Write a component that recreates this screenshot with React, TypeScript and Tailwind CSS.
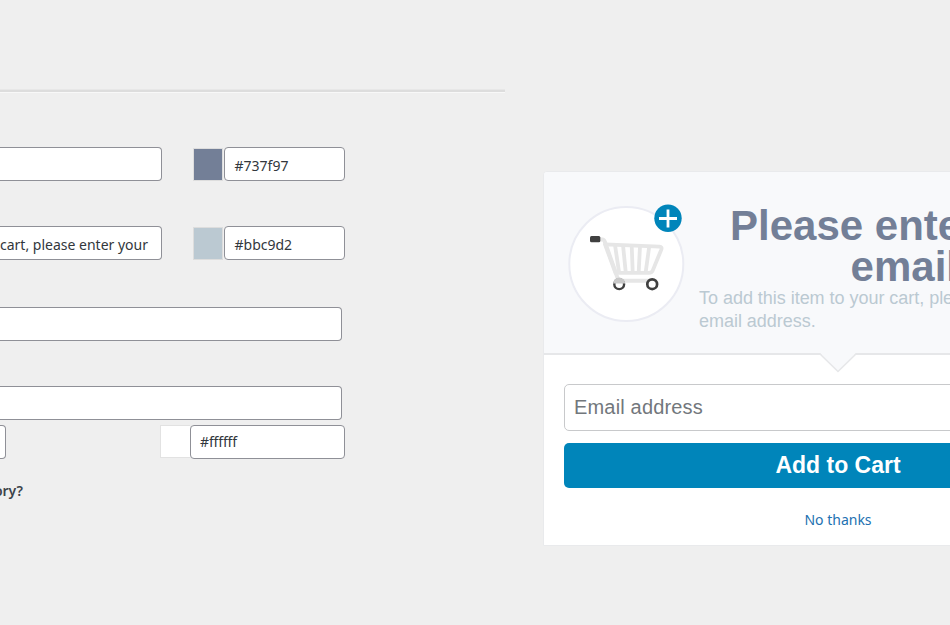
const uiFont = "font-['Noto_Sans',sans-serif]";

function Field({ className, children }: { className: string; children?: string }) {
  return (
    <div
      className={`flex h-[34px] shrink-0 items-center border border-[#8f9097] bg-white text-[14px] text-[#32373c] ${className}`}
    >
      {children}
    </div>
  );
}

function ColorField({ swatch, value }: { swatch: string; value: string }) {
  return (
    <div className="flex gap-px">
      <div className={`mt-px h-[33px] w-[30px] border border-[#dddddd] ${swatch}`} />
      <Field className="w-[121px] rounded-[4px] pt-[2px] pl-[9.5px]">{value}</Field>
    </div>
  );
}

function CartIcon() {
  return (
    <svg width="120" height="124" viewBox="0 0 120 124" fill="none" className="block">
      <circle cx="58.3" cy="64" r="57" fill="#fff" stroke="#ebecf3" strokeWidth="2" />
      <path d="M32 39.5h2.5q1.5 0 2.3 2.2L50.5 80.7H82" stroke="#e6e6e6" strokeWidth="4" strokeLinejoin="round" />
      <path d="M37 44.3 91.5 46.6q2.8.2 1.8 3l-8.4 20.5q-1 2.8-4 2.8H47.5Z" stroke="#e6e6e6" strokeWidth="3.8" strokeLinejoin="round" />
      <path d="m47 45 4 27M55 45l2.7 27M63.7 45l1 27M72 46l-1.3 26M81.3 46l-3.6 26" stroke="#e6e6e6" strokeWidth="3.8" />
      <rect x="22" y="36" width="10.3" height="6.3" rx="1.5" fill="#404040" />
      <circle cx="51.2" cy="84.2" r="4.9" fill="#fff" stroke="#404040" strokeWidth="2.4" />
      <path d="M45.2 83.6a6 6 0 0 1 12 0Z" fill="#c9c9c9" />
      <circle cx="84.2" cy="84.2" r="4.9" fill="#fff" stroke="#404040" strokeWidth="2.7" />
      <circle cx="100" cy="18.3" r="13.7" fill="#0085ba" />
      <path d="M100 9.5v18M91 18.5h18" stroke="#fff" strokeWidth="2.8" />
    </svg>
  );
}

function SettingsForm() {
  return (
    <section className={`w-[505px] shrink-0 pt-[89px] ${uiFont}`}>
      <div className="h-[4px] border-y border-t-[#e7e7e7] border-b-[#f8f8f8] bg-[#dddddd]" />
      <div className="mt-[54px] flex gap-[31px]">
        <Field className="w-[162px] rounded-r-[4px] border-l-0" />
        <ColorField swatch="bg-[#737f97]" value="#737f97" />
      </div>
      <div className="mt-[45px] flex gap-[31px]">
        <Field className="w-[162px] justify-end rounded-r-[4px] border-l-0 pt-[2px] pr-[13px] whitespace-nowrap">
          cart, please enter your
        </Field>
        <ColorField swatch="bg-[#bbc9d2]" value="#bbc9d2" />
      </div>
      <Field className="mt-[47px] w-[342px] rounded-r-[4px] border-l-0" />
      <Field className="mt-[45px] w-[342px] rounded-r-[4px] border-l-0" />
      <div className="mt-[4.5px] flex justify-between pr-[160px]">
        <Field className="w-[6px] rounded-r-[4px] border-l-0" />
        <div className="flex">
          <div className="h-[33px] w-[30px] border border-r-0 border-[#e2e2e2] bg-white" />
          <Field className="w-[155px] rounded-[4px] pb-px pl-[9px] tracking-[-0.15px]">#ffffff</Field>
        </div>
      </div>
      <div className="mt-[22.5px] flex w-[23px] justify-end text-[14px] leading-[20px] font-semibold text-[#3c434a]">
        ory?
      </div>
    </section>
  );
}

function CartPopup() {
  return (
    <section className="mt-[171px] ml-[38px] h-[375px] w-[590px] shrink-0 rounded-t-[4px] border border-[#e9eaec] bg-white font-['Liberation_Sans',Arial,sans-serif]">
      <header className="relative h-[183px] rounded-t-[3px] border-b-2 border-[#e6e7e9] bg-[#f8f9fb]">
        <div className="flex pt-[28px] pl-[24px]">
          <CartIcon />
          <div className="ml-[11px] pt-[5px]">
            <h1 className="pl-[31px] text-[42px] leading-[41px] font-bold whitespace-nowrap text-[#737f97]">
              <span className="block">Please enter your</span>
              <span className="block pl-[120.6px]">email</span>
            </h1>
            <p className="text-[18px] leading-[23px] tracking-[-0.03px] whitespace-nowrap text-[#bbc9d2]">
              To add this item to your cart, please enter your
              <br />
              email address.
            </p>
          </div>
        </div>
        <svg className="absolute top-[180px] left-[274px]" width="40" height="21" viewBox="0 0 40 21">
          <path d="M0 0h40v1h-2L20 19.3 2 1H0Z" fill="#f8f9fb" />
          <path d="m1.5 1.5 18.5 18 18.5-18" fill="none" stroke="#e6e7e9" strokeWidth="1.5" />
        </svg>
      </header>
      <div className="px-5 pt-[29px]">
        <div className="flex h-[47px] items-center rounded-[5px] border border-[#c8c9cb] pb-[2px] pl-[9px] text-[20px] tracking-[0.17px] text-[#72777c]">
          Email address
        </div>
        <button className="mt-[12px] block h-[45px] w-full rounded-[5px] bg-[#0085ba] text-[23px] leading-[45px] font-bold text-white">
          Add to Cart
        </button>
        <a className={`mt-[22px] block text-center text-[14px] leading-[20px] text-[#2271b1] ${uiFont}`}>No thanks</a>
      </div>
    </section>
  );
}

export default function App() {
  return (
    <main className="flex h-[625px] w-[950px] items-start overflow-hidden bg-[#efefef]">
      <SettingsForm />
      <CartPopup />
    </main>
  );
}
